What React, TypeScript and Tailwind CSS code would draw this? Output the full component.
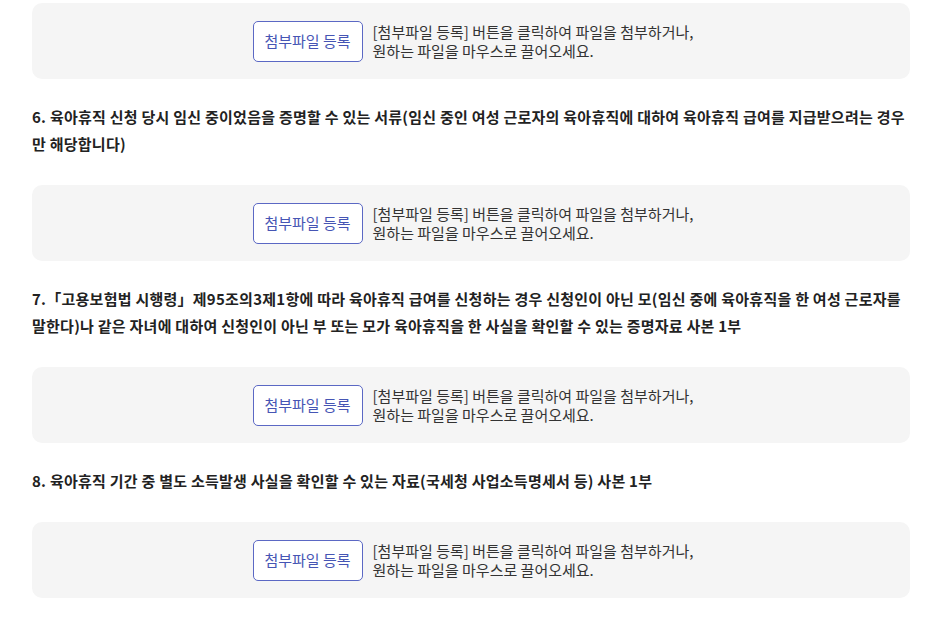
import React from "react";

const font = { fontFamily: '"Noto Sans CJK KR", "Noto Sans", sans-serif' };

function UploadBox() {
  return (
    <div className="w-[878px] h-[76px] rounded-[10px] bg-[#f5f5f5] flex items-center justify-center">
      <div className="flex items-center gap-[10px] pl-[4px]">
        <button className="w-[110px] h-[41px] rounded-[5px] border border-[#5b68c4] bg-white text-[15px] text-[#4655b4] flex items-center justify-center">
          첨부파일 등록
        </button>
        <div className="text-[15px] leading-[19px] text-[#333333]">
          <div>[첨부파일 등록] 버튼을 클릭하여 파일을 첨부하거나,</div>
          <div>원하는 파일을 마우스로 끌어오세요.</div>
        </div>
      </div>
    </div>
  );
}

function Heading({ children }: { children: React.ReactNode }) {
  return (
    <div className="mt-[24px] mb-[28px] text-[15px] leading-[27px] font-bold text-[#222222] tracking-[0.25px]">
      {children}
    </div>
  );
}

export default function App() {
  return (
    <div className="w-[930px] h-[623px] bg-white overflow-hidden pt-[3px] pl-[32px]" style={font}>
      <div className="w-[878px]">
        <UploadBox />
        <Heading>
          6. 육아휴직 신청 당시 임신 중이었음을 증명할 수 있는 서류(임신 중인 여성 근로자의 육아휴직에 대하여 육아휴직 급여를 지급받으려는 경우 만 해당합니다)
        </Heading>
        <UploadBox />
        <Heading>
          7.「고용보험법 시행령」제95조의3제1항에 따라 육아휴직 급여를 신청하는 경우 신청인이 아닌 모(임신 중에 육아휴직을 한 여성 근로자를 말한다)나 같은 자녀에 대하여 신청인이 아닌 부 또는 모가 육아휴직을 한 사실을 확인할 수 있는 증명자료 사본 1부
        </Heading>
        <UploadBox />
        <Heading>8. 육아휴직 기간 중 별도 소득발생 사실을 확인할 수 있는 자료(국세청 사업소득명세서 등) 사본 1부</Heading>
        <UploadBox />
      </div>
    </div>
  );
}
